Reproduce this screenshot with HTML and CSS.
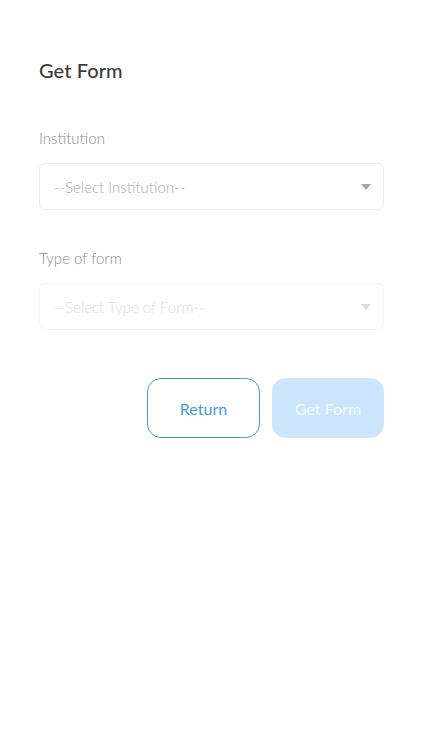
FILE: index.html
```html
<!DOCTYPE html>
<html lang="en">
<head>
<meta charset="utf-8">
<meta name="viewport" content="width=device-width, initial-scale=1">
<title>Get Form</title>
<link rel="stylesheet" href="styles.css">
</head>
<body>
<main class="page">
  <h1 class="title">Get Form</h1>
  <div class="field field-first">
    <label class="label">Institution</label>
    <div class="select">
      <span class="placeholder">--Select Institution--</span>
      <svg class="caret" width="10" height="6" viewBox="0 0 10 6"><path d="M0 0H10L5 6Z" fill="#a4a6ad"/></svg>
    </div>
  </div>
  <div class="field">
    <label class="label">Type of form</label>
    <div class="select select-disabled">
      <span class="placeholder">--Select Type of Form--</span>
      <svg class="caret" width="10" height="6" viewBox="0 0 10 6"><path d="M0 0H10L5 6Z" fill="#d9dadd"/></svg>
    </div>
  </div>
  <div class="actions">
    <button class="btn btn-outline">Return</button>
    <button class="btn btn-primary-disabled">Get Form</button>
  </div>
</main>
</body>
</html>
```
FILE: styles.css
```css
html, body {
  margin: 0;
  padding: 0;
  background: #ffffff;
}
body {
  font-family: "Lato", "Open Sans", sans-serif;
}
.page {
  padding: 56px 38px 0 39px;
}
.title {
  margin: 0;
  font-size: 20px;
  line-height: 28px;
  font-weight: 500;
  color: #3b3b3d;
  letter-spacing: 0.1px;
}
.field {
  margin-top: 38px;
}
.field-first {
  margin-top: 44px;
}
.label {
  display: block;
  font-size: 15px;
  line-height: 20px;
  font-weight: 300;
  color: #878c97;
}
.select {
  margin-top: 15px;
  height: 47px;
  box-sizing: border-box;
  border: 1px solid #ececee;
  border-radius: 6px;
  display: flex;
  align-items: center;
  justify-content: space-between;
  padding: 0 12px 0 14px;
}
.placeholder {
  font-size: 15px;
  font-weight: 300;
  color: #a9abb2;
}
.select-disabled {
  border-color: #f4f4f5;
}
.select-disabled .placeholder {
  color: #dcdde0;
}
.actions {
  margin-top: 48px;
  display: flex;
  justify-content: flex-end;
  gap: 12px;
}
.btn {
  width: 113px;
  height: 60px;
  box-sizing: border-box;
  border-radius: 14px;
  font-family: "Lato", "Open Sans", sans-serif;
  font-size: 16px;
  font-weight: 400;
  padding: 0;
}
.btn-outline {
  background: #ffffff;
  border: 1.5px solid #3d9be9;
  color: #3d9be9;
}
.btn-primary-disabled {
  width: 112px;
  background: #cbe6fc;
  border: none;
  color: #f4faff;
}
```
